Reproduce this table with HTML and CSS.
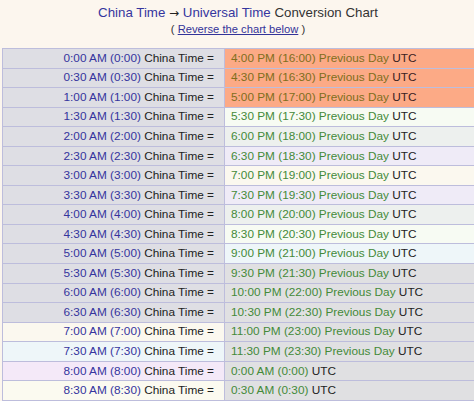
FILE: index.html
```html
<!DOCTYPE html>
<html>
<head>
<meta charset="utf-8">
<link rel="stylesheet" href="styles.css">
</head>
<body>
<div class="page">
  <div class="head">
    <div class="title"><span class="b">China Time</span> <span class="arrow">→</span> <span class="b">Universal Time</span> Conversion Chart</div>
    <div class="sub">( <a href="#" class="lnk">Reverse the chart below</a> )</div>
  </div>
  <table class="chart">
    <tr><td class="l gray"><span class="b">0:00 AM (0:00)</span> China Time =</td><td class="r orange"><span class="o">4:00 PM (16:00) Previous Day</span> UTC</td></tr>
    <tr><td class="l gray"><span class="b">0:30 AM (0:30)</span> China Time =</td><td class="r orange"><span class="o">4:30 PM (16:30) Previous Day</span> UTC</td></tr>
    <tr><td class="l gray"><span class="b">1:00 AM (1:00)</span> China Time =</td><td class="r orange"><span class="o">5:00 PM (17:00) Previous Day</span> UTC</td></tr>
    <tr><td class="l gray"><span class="b">1:30 AM (1:30)</span> China Time =</td><td class="r c1"><span class="g">5:30 PM (17:30) Previous Day</span> UTC</td></tr>
    <tr><td class="l gray"><span class="b">2:00 AM (2:00)</span> China Time =</td><td class="r c2"><span class="g">6:00 PM (18:00) Previous Day</span> UTC</td></tr>
    <tr><td class="l gray"><span class="b">2:30 AM (2:30)</span> China Time =</td><td class="r c3"><span class="g">6:30 PM (18:30) Previous Day</span> UTC</td></tr>
    <tr><td class="l gray"><span class="b">3:00 AM (3:00)</span> China Time =</td><td class="r c4"><span class="g">7:00 PM (19:00) Previous Day</span> UTC</td></tr>
    <tr><td class="l gray"><span class="b">3:30 AM (3:30)</span> China Time =</td><td class="r c3"><span class="g">7:30 PM (19:30) Previous Day</span> UTC</td></tr>
    <tr><td class="l gray"><span class="b">4:00 AM (4:00)</span> China Time =</td><td class="r c2"><span class="g">8:00 PM (20:00) Previous Day</span> UTC</td></tr>
    <tr><td class="l gray"><span class="b">4:30 AM (4:30)</span> China Time =</td><td class="r c1"><span class="g">8:30 PM (20:30) Previous Day</span> UTC</td></tr>
    <tr><td class="l gray"><span class="b">5:00 AM (5:00)</span> China Time =</td><td class="r c5"><span class="g">9:00 PM (21:00) Previous Day</span> UTC</td></tr>
    <tr><td class="l gray"><span class="b">5:30 AM (5:30)</span> China Time =</td><td class="r rgray"><span class="g">9:30 PM (21:30) Previous Day</span> UTC</td></tr>
    <tr><td class="l gray"><span class="b">6:00 AM (6:00)</span> China Time =</td><td class="r rgray"><span class="g">10:00 PM (22:00) Previous Day</span> UTC</td></tr>
    <tr><td class="l gray"><span class="b">6:30 AM (6:30)</span> China Time =</td><td class="r rgray"><span class="g">10:30 PM (22:30) Previous Day</span> UTC</td></tr>
    <tr><td class="l c4"><span class="b">7:00 AM (7:00)</span> China Time =</td><td class="r rgray"><span class="g">11:00 PM (23:00) Previous Day</span> UTC</td></tr>
    <tr><td class="l c5"><span class="b">7:30 AM (7:30)</span> China Time =</td><td class="r rgray"><span class="g">11:30 PM (23:30) Previous Day</span> UTC</td></tr>
    <tr><td class="l c6"><span class="b">8:00 AM (8:00)</span> China Time =</td><td class="r rgray"><span class="g">0:00 AM (0:00)</span> UTC</td></tr>
    <tr><td class="l c7"><span class="b">8:30 AM (8:30)</span> China Time =</td><td class="r rgray"><span class="g">0:30 AM (0:30)</span> UTC</td></tr>
  </table>
</div>
</body>
</html>
```
FILE: styles.css
```css
html, body {
  margin: 0;
  padding: 0;
  background: #fcf6ee;
  overflow: hidden;
}
.page {
  font-family: "Liberation Sans", Arial, sans-serif;
  color: #222;
  padding-left: 2px;
}
.head {
  text-align: center;
  padding-top: 4px;
  height: 48px;
  box-sizing: border-box;
}
.title {
  font-size: 13.3px;
  line-height: 17px;
  color: #333;
}
.arrow {
  font-family: "DejaVu Sans", sans-serif;
  font-size: 12px;
  color: #222;
}
.sub {
  font-size: 11.2px;
  line-height: 15px;
  color: #333;
}
.lnk {
  color: #333399;
  text-decoration: underline;
}
.b { color: #35359e; }
.g { color: #448a39; }
.o { color: #7f6e1c; }
.chart {
  border-collapse: collapse;
  width: 520px;
  font-size: 11.8px;
  table-layout: fixed;
}
.chart tr { height: 19.55px; }
.chart td {
  border: 1px solid #bdbddc;
  padding: 0;
  line-height: 15px;
  white-space: nowrap;
}
.chart td.l {
  width: 211px;
  text-align: right;
  padding-right: 10px;
}
.chart td.r {
  padding-left: 6px;
}
.gray { background: #dedee4; }
.rgray { background: #e0e0e2; }
.orange { background: #fcaa86; color: #3a2222; }
.c1 { background: #f7fbf3; }
.c2 { background: #edf0ee; }
.c3 { background: #efebf7; }
.c4 { background: #fbf8ef; }
.c5 { background: #eef6f9; }
.c6 { background: #f4e9f8; }
.c7 { background: #fbfaf0; }
```
